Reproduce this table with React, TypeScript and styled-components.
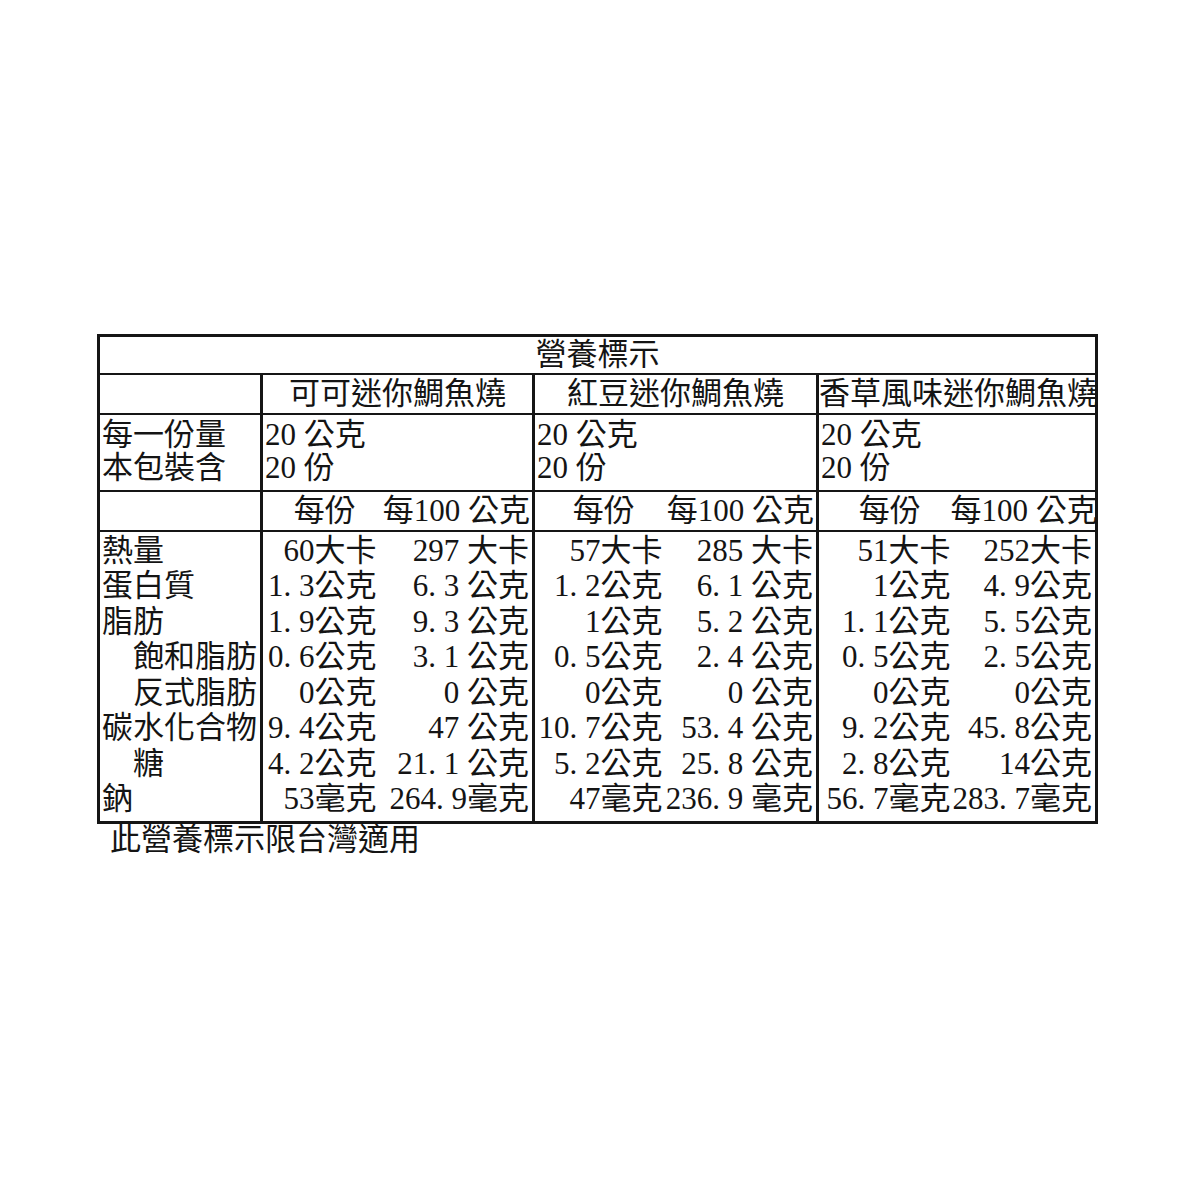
import styled, { createGlobalStyle } from "styled-components";

const GlobalStyle = createGlobalStyle`
    html, body {
        margin: 0;
        padding: 0;
        background: #ffffff;
    }
    body {
        font-family: "Liberation Serif", "Noto Sans CJK TC", serif;
        color: #141414;
    }
`;

const Page = styled.div`
    width: 1200px;
    height: 1200px;
    box-sizing: border-box;
    padding: 334px 0 0 97px;
`;

const Label = styled.table`
    border-collapse: collapse;
    table-layout: fixed;
    width: 998px;
    border: 3px solid #151515;
    font-size: 31px;
    line-height: 34px;
`;

const TitleCell = styled.td`
    height: 36px;
    padding: 0;
    text-align: center;
    border-bottom: 2px solid #151515;
`;

const HeadCell = styled.td`
    height: 38px;
    padding: 0;
    text-align: center;
    white-space: nowrap;
    border-bottom: 2px solid #151515;
    border-right: 3px solid #151515;
`;

const ServingCell = styled.td`
    height: 72px;
    padding: 3px 0 0 2px;
    vertical-align: top;
    white-space: nowrap;
    line-height: 33px;
    border-bottom: 2px solid #151515;
    border-right: 3px solid #151515;
`;

const UnitCell = styled.td<{ $side: "a" | "b" }>`
    height: 35px;
    padding: 0 ${p => (p.$side === "b" ? "2px" : "0")} 0 ${p => (p.$side === "a" ? "10px" : "0")};
    text-align: ${p => (p.$side === "a" ? "center" : "right")};
    white-space: nowrap;
    border-bottom: 2px solid #151515;
    border-right: ${p => (p.$side === "b" ? "3px solid #151515" : "none")};
`;

const NameCell = styled.td<{ $indent: boolean; $edge?: "first" | "last" }>`
    height: 35.5px;
    padding: ${p => (p.$edge === "first" ? "1px" : "0")} 0 ${p => (p.$edge === "last" ? "4px" : "0")} ${p => (p.$indent ? "33px" : "2px")};
    white-space: nowrap;
    border-right: 3px solid #151515;
`;

const ValueCell = styled.td<{ $side: "a" | "b"; $edge?: "first" | "last" }>`
    padding: ${p => (p.$edge === "first" ? "1px" : "0")} ${p => (p.$side === "b" ? "3px" : "0")} ${p => (p.$edge === "last" ? "4px" : "0")} 0;
    text-align: right;
    white-space: nowrap;
    border-right: ${p => (p.$side === "b" ? "3px solid #151515" : "none")};
`;

const Dot = styled.span`
    display: inline-block;
    width: 0.5em;
    text-align: left;
`;

const Note = styled.p`
    margin: -1px 0 0 13px;
    font-size: 31px;
    line-height: 34px;
`;

interface IProduct {
    name: string;
    serving: string;
    count: string;
    values: [string, string][];
}

const nutrients = [
    { name: "熱量", indent: false },
    { name: "蛋白質", indent: false },
    { name: "脂肪", indent: false },
    { name: "飽和脂肪", indent: true },
    { name: "反式脂肪", indent: true },
    { name: "碳水化合物", indent: false },
    { name: "糖", indent: true },
    { name: "鈉", indent: false },
];

const products: IProduct[] = [
    {
        name: "可可迷你鯛魚燒",
        serving: "20 公克",
        count: "20 份",
        values: [
            ["60大卡", "297 大卡"],
            ["1.3公克", "6.3 公克"],
            ["1.9公克", "9.3 公克"],
            ["0.6公克", "3.1 公克"],
            ["0公克", "0 公克"],
            ["9.4公克", "47 公克"],
            ["4.2公克", "21.1 公克"],
            ["53毫克", "264.9毫克"],
        ],
    },
    {
        name: "紅豆迷你鯛魚燒",
        serving: "20 公克",
        count: "20 份",
        values: [
            ["57大卡", "285 大卡"],
            ["1.2公克", "6.1 公克"],
            ["1公克", "5.2 公克"],
            ["0.5公克", "2.4 公克"],
            ["0公克", "0 公克"],
            ["10.7公克", "53.4 公克"],
            ["5.2公克", "25.8 公克"],
            ["47毫克", "236.9 毫克"],
        ],
    },
    {
        name: "香草風味迷你鯛魚燒",
        serving: "20 公克",
        count: "20 份",
        values: [
            ["51大卡", "252大卡"],
            ["1公克", "4.9公克"],
            ["1.1公克", "5.5公克"],
            ["0.5公克", "2.5公克"],
            ["0公克", "0公克"],
            ["9.2公克", "45.8公克"],
            ["2.8公克", "14公克"],
            ["56.7毫克", "283.7毫克"],
        ],
    },
];

// 소수점은 반각 폭으로 (원본 글꼴처럼 "1. 3" 모양)
function renderValue(text: string) {
    return text.split(/(\.)/).map((part, i) =>
        part === "." ? <Dot key={i}>.</Dot> : part
    );
}

const colWidths = [163, 115, 157, 129, 155, 133, 146];

function App() {
    return <Page>
        <GlobalStyle />
        <Label>
            <colgroup>
                {colWidths.map((w, i) => <col key={i} style={{ width: w }} />)}
            </colgroup>
            <tbody>
                <tr>
                    <TitleCell colSpan={7}>營養標示</TitleCell>
                </tr>
                <tr>
                    <HeadCell></HeadCell>
                    {products.map(p => <HeadCell key={p.name} colSpan={2}>{p.name}</HeadCell>)}
                </tr>
                <tr>
                    <ServingCell>每一份量<br />本包裝含</ServingCell>
                    {products.map(p =>
                        <ServingCell key={p.name} colSpan={2}>{p.serving}<br />{p.count}</ServingCell>
                    )}
                </tr>
                <tr>
                    <HeadCell></HeadCell>
                    {products.map(p => [
                        <UnitCell key={p.name + "a"} $side="a">每份</UnitCell>,
                        <UnitCell key={p.name + "b"} $side="b">每100 公克</UnitCell>,
                    ])}
                </tr>
                {nutrients.map((n, row) => {
                    const edge = row === 0 ? "first" : row === nutrients.length - 1 ? "last" : undefined;
                    return <tr key={n.name}>
                        <NameCell $indent={n.indent} $edge={edge}>{n.name}</NameCell>
                        {products.map(p => [
                            <ValueCell key={p.name + "a"} $side="a" $edge={edge}>{renderValue(p.values[row][0])}</ValueCell>,
                            <ValueCell key={p.name + "b"} $side="b" $edge={edge}>{renderValue(p.values[row][1])}</ValueCell>,
                        ])}
                    </tr>
                })}
            </tbody>
        </Label>
        <Note>此營養標示限台灣適用</Note>
    </Page>
}

export default App;
